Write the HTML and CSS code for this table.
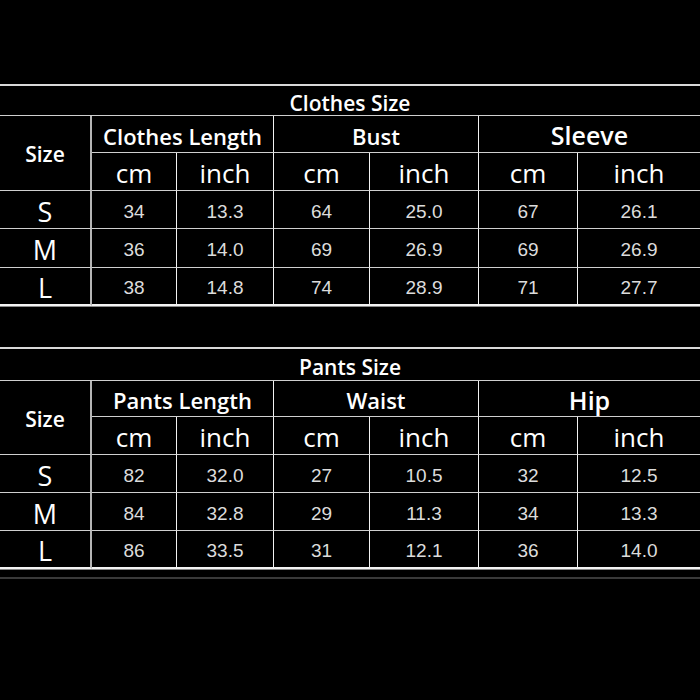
FILE: index.html
```html
<!DOCTYPE html>
<html>
<head>
<meta charset="utf-8">
<link rel="stylesheet" href="styles.css">
</head>
<body>
<div class="page">
  <table class="size-table t1">
    <colgroup>
      <col class="c-size"><col class="c1"><col class="c2"><col class="c3"><col class="c4"><col class="c5"><col class="c6">
    </colgroup>
    <tr class="r-title"><td colspan="7" class="title">Clothes Size</td></tr>
    <tr class="r-head">
      <td rowspan="2" class="size-h vsep">Size</td>
      <td colspan="2" class="head vline">Clothes Length</td>
      <td colspan="2" class="head vline">Bust</td>
      <td colspan="2" class="head big">Sleeve</td>
    </tr>
    <tr class="r-unit">
      <td class="unit vline">cm</td><td class="unit vline">inch</td>
      <td class="unit vline">cm</td><td class="unit vline">inch</td>
      <td class="unit vline">cm</td><td class="unit">inch</td>
    </tr>
    <tr class="r-data">
      <td class="sz vsep">S</td><td class="num vline">34</td><td class="num vline">13.3</td><td class="num vline">64</td><td class="num vline">25.0</td><td class="num vline">67</td><td class="num">26.1</td>
    </tr>
    <tr class="r-data r-mid">
      <td class="sz vsep">M</td><td class="num vline">36</td><td class="num vline">14.0</td><td class="num vline">69</td><td class="num vline">26.9</td><td class="num vline">69</td><td class="num">26.9</td>
    </tr>
    <tr class="r-data r-last">
      <td class="sz vsep">L</td><td class="num vline">38</td><td class="num vline">14.8</td><td class="num vline">74</td><td class="num vline">28.9</td><td class="num vline">71</td><td class="num">27.7</td>
    </tr>
  </table>

  <table class="size-table t2">
    <colgroup>
      <col class="c-size"><col class="c1"><col class="c2"><col class="c3"><col class="c4"><col class="c5"><col class="c6">
    </colgroup>
    <tr class="r-title r-title2"><td colspan="7" class="title">Pants Size</td></tr>
    <tr class="r-head r-head2">
      <td rowspan="2" class="size-h vsep">Size</td>
      <td colspan="2" class="head vline">Pants Length</td>
      <td colspan="2" class="head vline">Waist</td>
      <td colspan="2" class="head big">Hip</td>
    </tr>
    <tr class="r-unit">
      <td class="unit vline">cm</td><td class="unit vline">inch</td>
      <td class="unit vline">cm</td><td class="unit vline">inch</td>
      <td class="unit vline">cm</td><td class="unit">inch</td>
    </tr>
    <tr class="r-data">
      <td class="sz vsep">S</td><td class="num vline">82</td><td class="num vline">32.0</td><td class="num vline">27</td><td class="num vline">10.5</td><td class="num vline">32</td><td class="num">12.5</td>
    </tr>
    <tr class="r-data">
      <td class="sz vsep">M</td><td class="num vline">84</td><td class="num vline">32.8</td><td class="num vline">29</td><td class="num vline">11.3</td><td class="num vline">34</td><td class="num">13.3</td>
    </tr>
    <tr class="r-data r-last">
      <td class="sz vsep">L</td><td class="num vline">86</td><td class="num vline">33.5</td><td class="num vline">31</td><td class="num vline">12.1</td><td class="num vline">36</td><td class="num">14.0</td>
    </tr>
  </table>
  <div class="faint-line"></div>
</div>
</body>
</html>
```

FILE: styles.css
```css
html, body {
  margin: 0;
  padding: 0;
  background: #000;
}
body {
  width: 700px;
  height: 700px;
  overflow: hidden;
  color: #fff;
  font-family: "Open Sans", "Noto Sans", sans-serif;
}
.page {
  padding-top: 84px;
}
.size-table {
  width: 700px;
  table-layout: fixed;
  border-collapse: separate;
  border-spacing: 0;
  border-top: 2px solid #d8d8d8;
}
.t1 {
  border-bottom: 1px solid #8a8a8a;
}
.t2 {
  margin-top: 40px;
  border-bottom: 1px solid #8a8a8a;
}
.c-size { width: 92px; }
.c1 { width: 85px; }
.c2 { width: 97px; }
.c3 { width: 96px; }
.c4 { width: 109px; }
.c5 { width: 99px; }
.c6 { width: 122px; }

.size-table td {
  padding: 3px 0 0 0;
  text-align: center;
  vertical-align: middle;
  border-bottom: 1px solid #cfcfcf;
  line-height: 1;
  white-space: nowrap;
}
.vline { border-right: 1px solid #f2f2f2; }
.vsep { border-right: 2px solid #b5b5b5; }

.r-title { height: 30px; }
.r-title2 { height: 32px; }
.r-head { height: 37px; }
.r-head2 { height: 36px; }
.r-unit { height: 38px; }
.r-data { height: 38px; }
.r-mid { height: 39px; }
.r-last td { border-bottom: 2px solid #f4f4f4; }

.size-table td.title {
  font-weight: 600;
  font-size: 21px;
  padding-top: 5px;
}
.head {
  font-weight: 600;
  font-size: 22px;
}
.head.big {
  font-size: 25px;
}
.size-h {
  font-weight: 600;
  font-size: 21px;
}
.unit {
  font-size: 26px;
  font-weight: 400;
}
.sz {
  font-size: 27px;
  font-weight: 400;
}
.num {
  font-family: "Liberation Sans", Arial, sans-serif;
  font-size: 19px;
  color: #dcdcdc;
}
.faint-line {
  margin-top: 7px;
  height: 2px;
  background: #3a3a3a;
  width: 700px;
}
```
